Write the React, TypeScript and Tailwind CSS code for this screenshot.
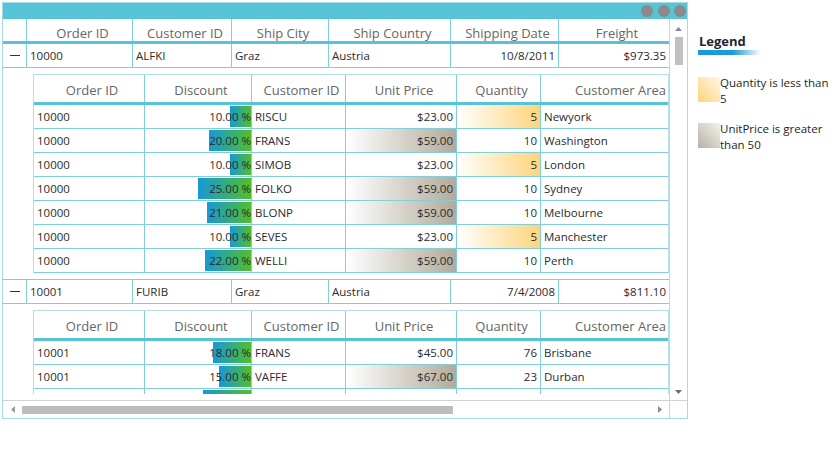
import React from "react";

type OrderDetail = {
  id: string;
  discount: number;
  customer: string;
  price: number;
  qty: number;
  area: string;
  hidden?: boolean;
};

type Order = {
  id: string;
  customer: string;
  city: string;
  country: string;
  date: string;
  freight: string;
  details: OrderDetail[];
};

const orders: Order[] = [
  {
    id: "10000",
    customer: "ALFKI",
    city: "Graz",
    country: "Austria",
    date: "10/8/2011",
    freight: "$973.35",
    details: [
      { id: "10000", discount: 10, customer: "RISCU", price: 23, qty: 5, area: "Newyork" },
      { id: "10000", discount: 20, customer: "FRANS", price: 59, qty: 10, area: "Washington" },
      { id: "10000", discount: 10, customer: "SIMOB", price: 23, qty: 5, area: "London" },
      { id: "10000", discount: 25, customer: "FOLKO", price: 59, qty: 10, area: "Sydney" },
      { id: "10000", discount: 21, customer: "BLONP", price: 59, qty: 10, area: "Melbourne" },
      { id: "10000", discount: 10, customer: "SEVES", price: 23, qty: 5, area: "Manchester" },
      { id: "10000", discount: 22, customer: "WELLI", price: 59, qty: 10, area: "Perth" },
    ],
  },
  {
    id: "10001",
    customer: "FURIB",
    city: "Graz",
    country: "Austria",
    date: "7/4/2008",
    freight: "$811.10",
    details: [
      { id: "10001", discount: 18, customer: "FRANS", price: 45, qty: 76, area: "Brisbane" },
      { id: "10001", discount: 15, customer: "VAFFE", price: 67, qty: 23, area: "Durban" },
      // only the top edge of this row shows above the scroll edge
      { id: "", discount: 23, customer: "", price: 23, qty: 12, area: "", hidden: true },
    ],
  },
];

const line = "border-[#7fcfdd]";

const HeaderCell = ({ w, label, last }: { w: string; label?: string; last?: boolean }) => (
  <div className={`${w} h-full flex items-end justify-center pb-[2px] pl-[6px] text-[13px] text-[#666666] whitespace-nowrap overflow-hidden ${last ? "" : "border-r " + line}`}>
    {label}
  </div>
);

const TopHeaderCell = ({ w, label, last }: { w: string; label?: string; last?: boolean }) => (
  <div className={`${w} h-full flex items-start justify-center pt-[5px] pl-[6px] text-[13px] leading-[18px] text-[#666666] whitespace-nowrap overflow-hidden ${last ? "" : "border-r " + line}`}>
    {label}
  </div>
);

const Cell = ({
  w,
  children,
  right,
  last,
  extra,
}: {
  w: string;
  children?: React.ReactNode;
  right?: boolean;
  last?: boolean;
  extra?: string;
}) => (
  <div
    className={`${w} h-full flex items-center whitespace-nowrap overflow-hidden ${right ? "justify-end pr-[3px]" : "pl-[3px]"} ${last ? "" : "border-r " + line} ${extra ?? ""}`}
  >
    {children}
  </div>
);

const DetailTable = ({ rows }: { rows: OrderDetail[] }) => (
  <div className="w-[636px] border-l border-t border-r border-[#b2e0e8]">
    <div className="h-[27px] flex">
      <HeaderCell w="w-[111px]" label="Order ID" />
      <HeaderCell w="w-[107px]" label="Discount" />
      <HeaderCell w="w-[94px]" label="Customer ID" />
      <HeaderCell w="w-[111px]" label="Unit Price" />
      <HeaderCell w="w-[84px]" label="Quantity" />
      <div className="w-[127px] h-full flex items-end justify-end pb-[2px] pr-[2px] text-[13px] text-[#666666] whitespace-nowrap">
        Customer Area
      </div>
    </div>
    <div className="h-[3px] bg-[#56c3d6]" />
    {rows.map((r, i) => (
      <div key={i} className={`h-[24px] flex border-b ${line}`}>
        <Cell w="w-[111px]">{r.id}</Cell>
        <div className={`w-[107px] h-full relative flex items-center justify-end border-r ${line}`}>
          <div
            className="absolute right-0 top-[1px] bottom-[1px] bg-[linear-gradient(to_right,#1798d8,#52be2b)]"
            style={{ width: Math.round(r.discount * 2.1) }}
          />
          {!r.hidden && <span className="relative">{r.discount.toFixed(2)} %</span>}
        </div>
        <Cell w="w-[94px]">{r.customer}</Cell>
        <Cell
          w="w-[111px]"
          right
          extra={r.price > 50 ? "bg-[linear-gradient(to_right,#ffffff,#b3aa9a)]" : ""}
        >
          {!r.hidden && `$${r.price.toFixed(2)}`}
        </Cell>
        <Cell
          w="w-[84px]"
          right
          extra={r.qty <= 5 ? "bg-[linear-gradient(to_right,#ffffff,#fdd47a)]" : ""}
        >
          {!r.hidden && r.qty}
        </Cell>
        <Cell w="w-[127px]" last>
          {r.area}
        </Cell>
      </div>
    ))}
  </div>
);

const OrderBlock = ({ o }: { o: Order }) => (
  <>
    <div className={`h-[24px] flex border-b ${line}`}>
      <div className={`w-[24px] h-full flex items-center justify-center border-r ${line}`}>
        <div className="w-[10px] h-px bg-[#333333]" />
      </div>
      <Cell w="w-[106px]">{o.id}</Cell>
      <Cell w="w-[99px]">{o.customer}</Cell>
      <Cell w="w-[97px]">{o.city}</Cell>
      <Cell w="w-[122px]">{o.country}</Cell>
      <Cell w="w-[108px]" right>
        {o.date}
      </Cell>
      <Cell w="w-[110px]" right last>
        {o.freight}
      </Cell>
    </div>
    <div className={`pl-[30px] pt-[6px] pb-[6px] border-b ${line}`}>
      <DetailTable rows={o.details} />
    </div>
  </>
);

export default function App() {
  return (
    <div className="w-[840px] h-[450px] bg-white flex items-start pt-[2px] pl-[2px] font-['Open_Sans','Noto_Sans',sans-serif] text-[11.5px] text-[#2b2b2b]">
      {/* Grid window */}
      <div className="w-[686px] h-[417px] border border-[#a6dae4] flex flex-col">
        <div className="h-[16px] bg-[#56c3d6] flex items-center justify-end gap-[4.5px] pr-[1px]">
          <div className="w-[12px] h-[12px] rounded-full bg-[#8a8a8a]" />
          <div className="w-[12px] h-[12px] rounded-full bg-[#8a8a8a]" />
          <div className="w-[12px] h-[12px] rounded-full bg-[#8a8a8a]" />
        </div>

        <div className="h-[381px] flex">
          <div className="w-[666px] flex flex-col">
            <div className="h-[22px] flex">
              <TopHeaderCell w="w-[24px]" />
              <TopHeaderCell w="w-[106px]" label="Order ID" />
              <TopHeaderCell w="w-[99px]" label="Customer ID" />
              <TopHeaderCell w="w-[97px]" label="Ship City" />
              <TopHeaderCell w="w-[122px]" label="Ship Country" />
              <TopHeaderCell w="w-[108px]" label="Shipping Date" />
              <TopHeaderCell w="w-[110px]" label="Freight" last />
            </div>
            <div className="h-[3px] bg-[#56c3d6]" />
            <div className="h-[350px] overflow-hidden">
              {orders.map((o) => (
                <OrderBlock key={o.id} o={o} />
              ))}
            </div>
          </div>

          {/* Vertical scrollbar */}
          <div className="w-[18px] border-l border-[#d2d2d2] flex flex-col items-center">
            <svg width="7" height="4" viewBox="0 0 7 4" className="mt-[8px]">
              <path d="M0 4 L3.5 0 L7 4 Z" fill="#8a8a8a" />
            </svg>
            <div className="w-[8px] h-[28px] bg-[#c1c1c1] mt-[6px]" />
            <div className="flex-1" />
            <svg width="7" height="4" viewBox="0 0 7 4" className="mb-[6px]">
              <path d="M0 0 L7 0 L3.5 4 Z" fill="#6e6e6e" />
            </svg>
          </div>
        </div>

        {/* Horizontal scrollbar */}
        <div className="h-[18px] border-t border-[#d2d2d2] flex">
          <div className="w-[666px] flex items-center">
            <svg width="4" height="7" viewBox="0 0 4 7" className="ml-[8px]">
              <path d="M4 0 L0 3.5 L4 7 Z" fill="#9a9a9a" />
            </svg>
            <div className="w-[431px] h-[8px] bg-[#bdbdbd] ml-[7px]" />
            <div className="flex-1" />
            <svg width="4" height="7" viewBox="0 0 4 7" className="mr-[7px]">
              <path d="M0 0 L4 3.5 L0 7 Z" fill="#8a8a8a" />
            </svg>
          </div>
          <div className="w-[18px] border-l border-[#d2d2d2]" />
        </div>
      </div>

      {/* Legend */}
      <div className="ml-[10px] pt-[31px] flex flex-col">
        <div className="pl-[1px] text-[13px] font-bold leading-[16px] text-[#1d2533]">Legend</div>
        <div className="mt-[1px] w-[63px] h-[5px] bg-[linear-gradient(to_right,#1a9ad6_55%,#ffffff)]" />
        <div className="mt-[22px] flex items-start">
          <div className="w-[22px] h-[25px] shrink-0 bg-[linear-gradient(to_bottom_left,#fff7e6,#fdd47c)]" />
          <div className="w-[112px] -mt-[2px] leading-[16px] text-[#1e1e1e]">Quantity is less than 5</div>
        </div>
        <div className="mt-[16px] flex items-start">
          <div className="w-[22px] h-[25px] shrink-0 bg-[linear-gradient(to_bottom_left,#f3f2ee,#b7b1a4)]" />
          <div className="w-[112px] -mt-[2px] leading-[16px] text-[#1e1e1e]">UnitPrice is greater than 50</div>
        </div>
      </div>
    </div>
  );
}
